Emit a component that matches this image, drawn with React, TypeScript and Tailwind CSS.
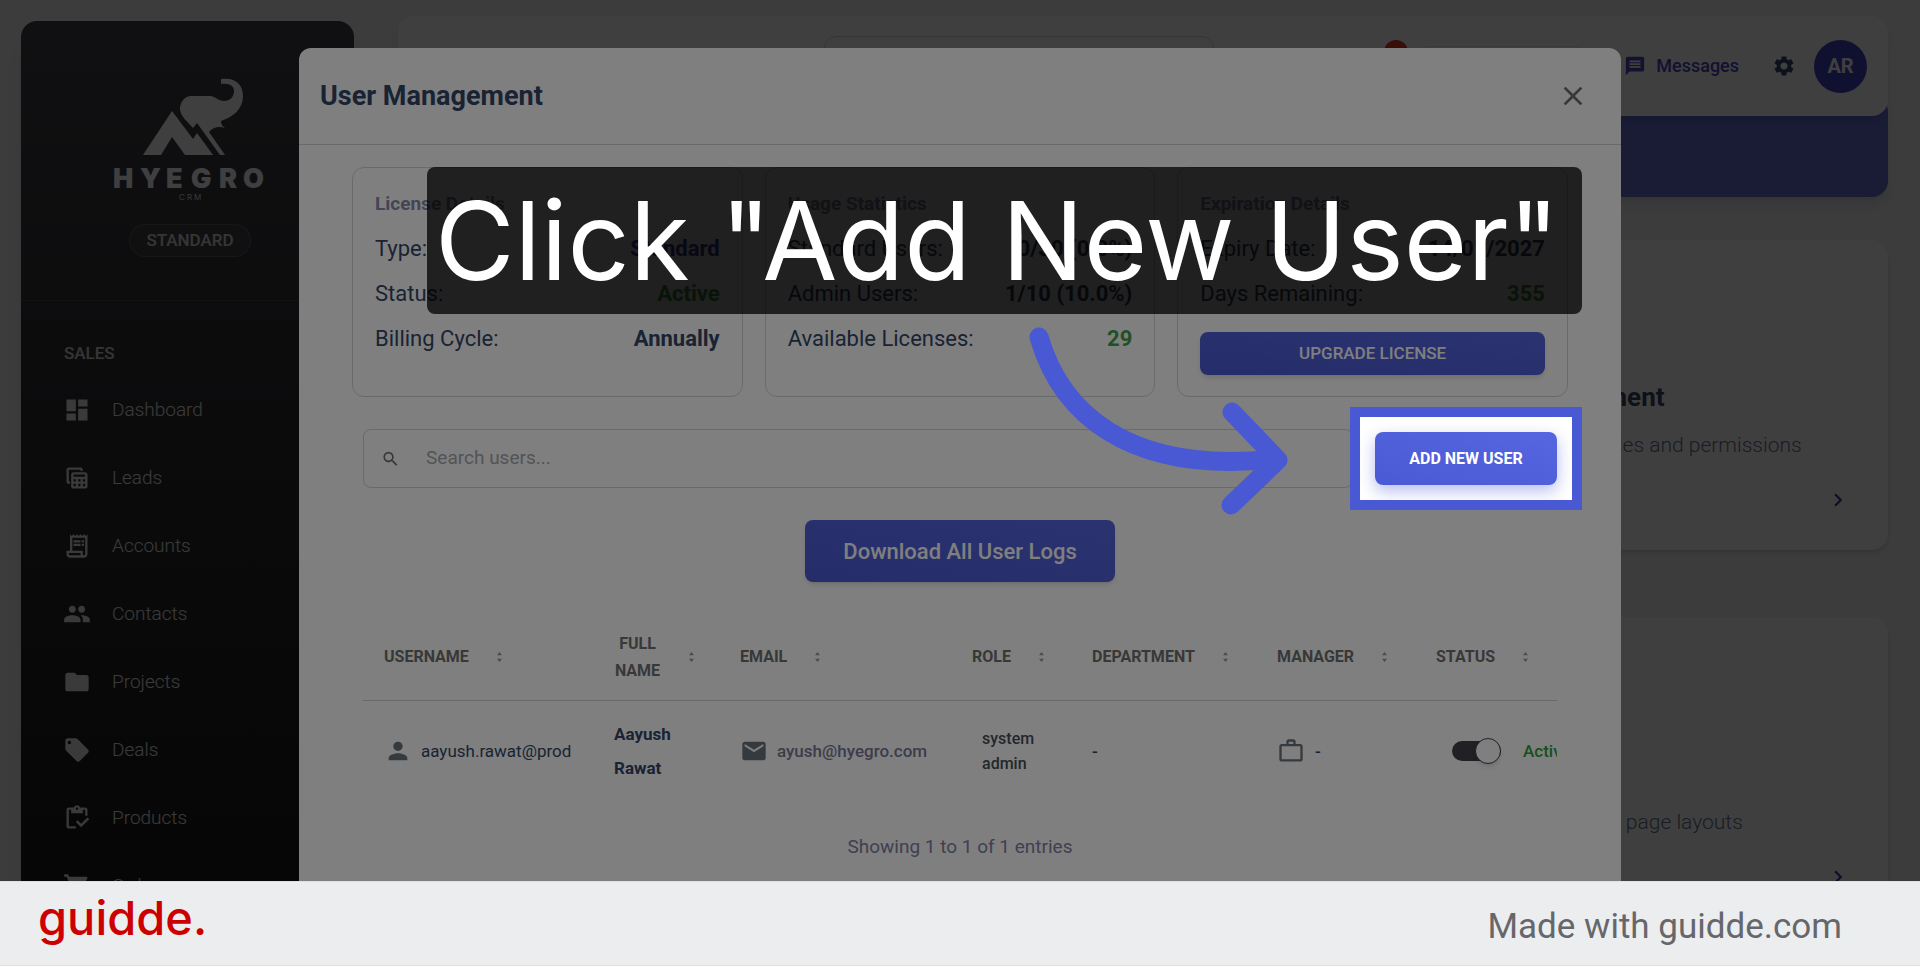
import type { ReactNode } from "react";
import type { IconType } from "react-icons";
import {
  MdChevronRight,
  MdClose,
  MdDashboard,
  MdEmail,
  MdFolder,
  MdLocalOffer,
  MdMessage,
  MdOutlineInventory,
  MdOutlineReceiptLong,
  MdOutlineTableView,
  MdPeople,
  MdPerson,
  MdSearch,
  MdSettings,
  MdShoppingCart,
  MdWorkOutline,
} from "react-icons/md";

const navItems: { label: string; icon: IconType }[] = [
  { label: "Dashboard", icon: MdDashboard },
  { label: "Leads", icon: MdOutlineTableView },
  { label: "Accounts", icon: MdOutlineReceiptLong },
  { label: "Contacts", icon: MdPeople },
  { label: "Projects", icon: MdFolder },
  { label: "Deals", icon: MdLocalOffer },
  { label: "Products", icon: MdOutlineInventory },
  { label: "Orders", icon: MdShoppingCart },
];

const columns = [
  { label: "USERNAME", width: "w-[230px]" },
  { label: "FULL NAME", width: "w-[126px]" },
  { label: "EMAIL", width: "w-[232px]" },
  { label: "ROLE", width: "w-[120px]" },
  { label: "DEPARTMENT", width: "w-[185px]" },
  { label: "MANAGER", width: "w-[159px]" },
  { label: "STATUS", width: "w-auto" },
];

const Logo = () => (
  <svg viewBox="0 0 156 126" className="w-[156px] h-[126px] fill-white" role="img" aria-label="Hyegro CRM">
    <path d="M31 77 60 33 81 61 85 55 101 77H73L60 59 49 77Z" />
    <path d="M68 31C68 24 73 18 79 18H99C104 19 107 23 112 23C118 23 122 19 122 13C122 8 118 5 109 6V1C123 -1 131 6 131 18C131 31 121 39 109 43C109 46 110 48 113 50C107 48 101 49 97 54L113 77H108L85 45 81 50C76 44 68 38 68 31Z" />
    <text y="110" className="font-['Inter'] font-black text-[27px]" x="1 28 54 79 107 131">
      HYEGRO
    </text>
    <text y="122" className="font-['Inter'] font-light text-[8px]" x="67 75 82">
      CRM
    </text>
  </svg>
);

const Sidebar = () => (
  <aside className="flex flex-col w-[333px] shrink-0 mt-[21px] rounded-t-2xl bg-linear-to-b from-[#42424a] to-[#191919] text-white shadow-xl">
    <div className="flex flex-col items-center pt-[57px] pb-[43px] pl-[5px] border-b border-white/10">
      <Logo />
      <span className="mt-5 w-[122px] h-[33px] rounded-full border border-white/15 bg-white/5 text-center text-[17px] leading-[30px] font-medium text-white/80">
        STANDARD
      </span>
    </div>
    <h2 className="mt-10 pl-[43px] text-[17px] leading-6 font-medium text-white/80">SALES</h2>
    <nav className="mt-[11px]">
      {navItems.map(({ label, icon: Icon }) => (
        <a key={label} href="#" className="flex items-center h-[68px] pl-[42px] gap-[21px] text-[19px] font-light text-white/90">
          <Icon className="size-7" />
          {label}
        </a>
      ))}
    </nav>
  </aside>
);

const SettingsCard = ({ title, text }: { title: string; text: string }) => (
  <article className="flex flex-col h-[310px] w-[478px] ml-auto pl-10 pr-[37px] pb-[37px] justify-end rounded-2xl bg-white shadow-md whitespace-nowrap">
    <h2 className="text-[26px] leading-9 font-bold text-[#344767]">{title}</h2>
    <p className="mt-3 text-[21px] leading-9 font-light text-[#67748e]">{text}</p>
    <a href="#" aria-label={title} className="self-end mt-6 text-[#3a3aa8]">
      <MdChevronRight className="size-[26px]" />
    </a>
  </article>
);

const Dashboard = () => (
  <div className="flex-1 min-w-0 pt-4">
    <header className="relative z-10 flex h-[100px] rounded-2xl bg-white shadow-lg">
      <div className="ml-[426px] mt-5 w-[390px] h-[60px] rounded-xl border border-gray-300" />
      <div className="ml-[170px] mt-6 size-6 rounded-full bg-[#e53924]" />
      <div className="ml-3 mt-[30px] w-[163px] h-10 rounded-lg border border-gray-200" />
      <div className="ml-auto mr-[21px] flex items-center">
        <a href="#" className="flex items-center gap-[10px] text-lg font-medium text-[#4a45c0]">
          <MdMessage className="size-[22px]" />
          Messages
        </a>
        <button aria-label="Settings" className="ml-[33px] text-[#344767]">
          <MdSettings className="size-6" />
        </button>
        <span className="ml-[18px] size-[53px] rounded-full bg-[#4340c4] text-center text-xl leading-[53px] font-bold text-white">AR</span>
      </div>
    </header>
    <div className="-mt-5 h-[101px] rounded-2xl bg-[#6873d8] shadow-lg" />
    <div className="mt-[43px] flex flex-col gap-[67px]">
      <SettingsCard title="User Management" text="Manage users / roles and permissions" />
      <SettingsCard title="Page Layout" text="Customize menus, page layouts" />
    </div>
  </div>
);

const InfoCard = ({ title, children }: { title: string; children: ReactNode }) => (
  <section className="h-[230px] rounded-xl border border-gray-300 px-[22px] pt-[22px]">
    <h3 className="mb-2 text-[19px] leading-7 font-bold text-[#8b89ae]">{title}</h3>
    {children}
  </section>
);

const InfoRow = ({ label, value, color = "text-[#344767]" }: { label: string; value: string; color?: string }) => (
  <div className="flex justify-between h-[45px] items-center text-[22px] text-[#344767]">
    <span>{label}</span>
    <span className={`font-bold ${color}`}>{value}</span>
  </div>
);

const SortIcon = () => (
  <svg viewBox="0 0 6 12" className="w-[5px] h-[10px] shrink-0 fill-[#999999]">
    <path d="M3 0 6 4H0ZM3 12 0 8H6Z" />
  </svg>
);

const UserTable = () => (
  <div className="overflow-hidden">
    <table className="w-full table-fixed text-left">
      <thead>
        <tr className="border-b border-gray-300 text-base leading-[27px] text-[#707070]">
          {columns.map(({ label, width }) => (
            <th key={label} className={`h-[86px] pl-[21px] font-bold ${width}`}>
              <div className="flex items-center gap-[28px]">
                <span className={label === "FULL NAME" ? "w-[47px] text-center" : ""}>{label}</span>
                <SortIcon />
              </div>
            </th>
          ))}
        </tr>
      </thead>
      <tbody>
        <tr className="h-[102px] text-[17px] font-medium text-[#344767]">
          <td className="pl-[21px]">
            <div className="flex items-center gap-[9px] font-normal">
              <MdPerson className="size-7 text-[#6b757d]" />
              aayush.rawat@prod
            </div>
          </td>
          <td className="pl-[21px] pr-6 leading-[34px] font-bold">Aayush Rawat</td>
          <td className="pl-[21px]">
            <div className="flex items-center gap-[9px] text-[#7a7896]">
              <MdEmail className="size-7 text-[#6b757d]" />
              ayush@hyegro.com
            </div>
          </td>
          <td className="pl-[31px] leading-[25px] text-base text-[#495057]">system admin</td>
          <td className="pl-[21px]">-</td>
          <td className="pl-[21px]">
            <div className="flex items-center gap-[10px]">
              <MdWorkOutline className="size-7 text-[#6b757d]" />-
            </div>
          </td>
          <td className="pl-[37px]">
            <div className="flex items-center gap-[22px] text-[#2e9e3a]">
              <label className="relative flex h-5 w-[49px] shrink-0 rounded-full bg-[#42424a]">
                <input type="checkbox" defaultChecked aria-label="User status" className="appearance-none" />
                <span className="absolute -top-[3px] right-0 size-[26px] rounded-full border border-[#42424a] bg-white shadow-md" />
              </label>
              Active
            </div>
          </td>
        </tr>
      </tbody>
    </table>
  </div>
);

const UserManagementModal = () => (
  <div className="absolute inset-0 z-20 bg-black/50 px-[299px] pt-12">
    <div role="dialog" aria-labelledby="modal-title" className="min-h-[1000px] rounded-xl bg-white">
      <header className="flex h-[97px] items-center justify-between border-b border-gray-300 px-[21px]">
        <h1 id="modal-title" className="text-[27px] font-bold text-[#344767]">User Management</h1>
        <button aria-label="Close" className="mr-[11px] text-[#6f6f6f]">
          <MdClose className="size-8" />
        </button>
      </header>
      <div className="px-[53px] pt-[22px]">
        <div className="grid grid-cols-3 gap-[22px]">
          <InfoCard title="License Details">
            <InfoRow label="Type:" value="Standard" color="text-[#3a3aa8]" />
            <InfoRow label="Status:" value="Active" color="text-[#43a047]" />
            <InfoRow label="Billing Cycle:" value="Annually" />
          </InfoCard>
          <InfoCard title="Usage Statistics">
            <InfoRow label="Standard Users:" value="0/30 (0.0%)" />
            <InfoRow label="Admin Users:" value="1/10 (10.0%)" />
            <InfoRow label="Available Licenses:" value="29" color="text-[#43a047]" />
          </InfoCard>
          <InfoCard title="Expiration Details">
            <InfoRow label="Expiry Date:" value="14/01/2027" />
            <InfoRow label="Days Remaining:" value="355" color="text-[#43a047]" />
            <button className="mt-4 h-[43px] w-full rounded-lg bg-linear-to-tr from-[#4a5ad4] to-[#5566e0] text-[17px] font-medium text-white shadow-md">
              UPGRADE LICENSE
            </button>
          </InfoCard>
        </div>
        <div className="px-[11px] pt-8">
          <div className="flex items-center gap-[22px]">
            <label className="flex h-[59px] flex-1 items-center gap-[26px] rounded-lg border border-gray-300 px-[17px]">
              <MdSearch className="size-5 text-[#6f6f6f]" />
              <input type="text" aria-label="Search users" placeholder="Search users..." className="w-full text-[19px] outline-none placeholder:text-[#a5a8ac]" />
            </label>
            <div className="relative">
              <button className="h-[53px] w-[182px] rounded-lg bg-linear-to-tr from-[#4a5ad4] to-[#5566e0] text-base font-bold text-white shadow-[0_6px_16px_#4a5ad466]">
                ADD NEW USER
              </button>
              {/* spotlight: the spread shadow dims everything outside the frame */}
              <div className="pointer-events-none absolute -inset-[25px] z-10 border-10 border-[#4859d3] shadow-[0_0_0_3000px_#00000080]" />
            </div>
          </div>
          <div className="mt-8 flex justify-center">
            <button className="h-[62px] w-[310px] rounded-lg bg-linear-to-tr from-[#4a5ad4] to-[#5566e0] text-[22px] font-medium text-white shadow-md">
              Download All User Logs
            </button>
          </div>
          <div className="mt-8">
            <UserTable />
          </div>
          <p className="mt-[31px] text-center text-[19px] text-[#8280a4]">Showing 1 to 1 of 1 entries</p>
        </div>
      </div>
    </div>
  </div>
);

const GuideAnnotations = () => (
  <>
    <div className="absolute left-[427px] top-[167px] z-30 h-[147px] w-[1155px] rounded-lg bg-black/75 pl-2 font-['Inter'] text-[109px] leading-[147px] whitespace-nowrap text-white">
      Click "Add New User"
    </div>
    <svg viewBox="0 0 270 200" className="absolute left-[1025px] top-[323px] z-30 w-[270px] h-[200px] fill-none stroke-[#4859d3]" strokeWidth="19" strokeLinecap="round" strokeLinejoin="round">
      <path d="M14 14C35 87 100 152 250 136M207 89 253 137 206 182" />
    </svg>
  </>
);

export default function App() {
  return (
    <div className="flex h-screen flex-col overflow-hidden font-['Roboto',sans-serif]">
      <main className="relative min-h-0 flex-1 overflow-hidden bg-[#f0f1f2]">
        <div className="flex h-full gap-11 pl-[21px] pr-8">
          <Sidebar />
          <Dashboard />
        </div>
        <UserManagementModal />
        <GuideAnnotations />
      </main>
      <footer className="flex h-[85px] shrink-0 items-center justify-between border-y border-[#dfe0e3] bg-[#ecedef] pl-[38px] pr-[78px]">
        <span className="pb-3 font-['Inter'] text-[47px] leading-none font-medium text-[#cc0000]">guidde.</span>
        <span className="mt-2 text-[35px] text-[#66676a]">Made with guidde.com</span>
      </footer>
    </div>
  );
}
